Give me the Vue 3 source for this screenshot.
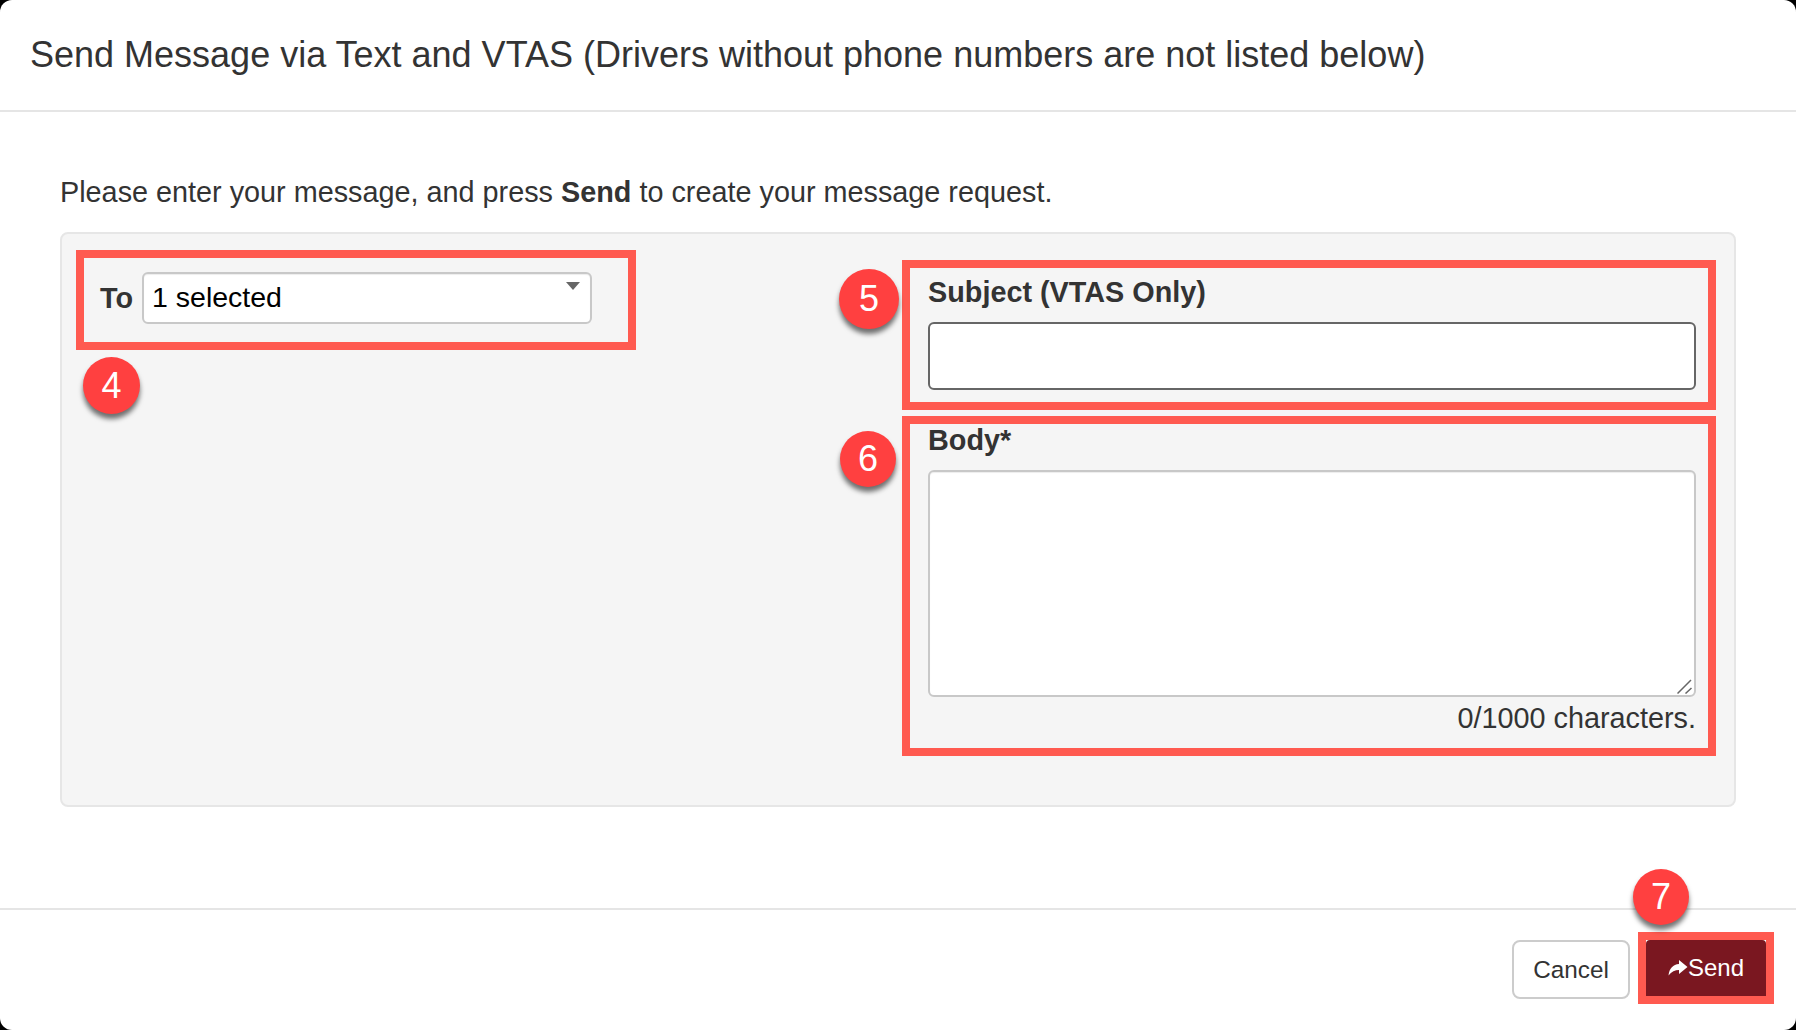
<template>
  <div class="modal">
    <header class="modal-header">
      <h4>Send Message via Text and VTAS (Drivers without phone numbers are not listed below)</h4>
    </header>

    <main class="modal-body">
      <p class="intro">Please enter your message, and press <b>Send</b> to create your message request.</p>
      <div class="well">
        <div class="col-left">
          <div class="callout to-box">
            <label>To</label>
            <div class="fake-select">
              <span>1 selected</span>
              <i class="caret"></i>
            </div>
            <span class="badge badge-4">4</span>
          </div>
        </div>
        <div class="col-right">
          <div class="callout subject-box">
            <label>Subject (VTAS Only)</label>
            <input type="text" class="subject" />
            <span class="badge badge-5">5</span>
          </div>
          <div class="callout body-box">
            <label>Body*</label>
            <div class="area-wrap">
              <textarea></textarea>
              <svg class="grip" width="16" height="16" viewBox="0 0 16 16">
                <path d="M0.5 15.5L14 2M8.5 15.5L14.5 10" stroke="#666" stroke-width="1.5" fill="none" />
              </svg>
            </div>
            <div class="count">{{ body.length }}/1000 characters.</div>
            <span class="badge badge-6">6</span>
          </div>
        </div>
      </div>
    </main>

    <footer class="modal-footer">
      <button type="button" class="btn-cancel">Cancel</button>
      <div class="send-box">
        <button type="button" class="btn-send">
          <svg width="20" height="16" viewBox="0 0 20 16">
            <path fill="#fff" d="M19.5 7L11 0V4C5 4.5 1.5 8 0.5 15.5C3.5 11.5 7 10 11 10V14Z" />
          </svg>Send
        </button>
        <span class="badge badge-7">7</span>
      </div>
    </footer>
  </div>
</template>

<script setup>
import { ref } from "vue";

const body = ref("");
</script>

<style>
html,
body {
  margin: 0;
  background: #000;
}
</style>

<style scoped>
.modal {
  width: 1796px;
  height: 1030px;
  display: flex;
  flex-direction: column;
  background: #fff;
  border-radius: 12px;
  overflow: hidden;
  font-family: "Liberation Sans", Arial, sans-serif;
  color: #333;
}

.modal-header {
  height: 110px;
  box-sizing: content-box;
  border-bottom: 2px solid #e5e5e5;
  display: flex;
  align-items: center;
  padding-left: 30px;
}

.modal-header h4 {
  margin: 0;
  font-size: 36px;
  font-weight: 400;
  line-height: 1;
}

.modal-body {
  flex: 1;
  padding: 0 60px;
}

.intro {
  margin: 62px 0 0;
  height: 58px;
  font-size: 28.8px;
  line-height: 36px;
}

.well {
  display: grid;
  grid-template-columns: 826px 1fr;
  height: 575px;
  box-sizing: border-box;
  background: #f5f5f5;
  border: 2px solid #e6e6e6;
  border-radius: 8px;
  padding: 16px 17px 0 14px;
}

.callout {
  position: relative;
  box-sizing: border-box;
  border: 8px solid #ff5a50;
}

label {
  font-size: 28.8px;
  font-weight: 700;
  line-height: 32px;
}

.to-box {
  width: 560px;
  height: 100px;
  display: flex;
  padding: 14px 0 0 16px;
  gap: 9px;
}

.to-box label {
  line-height: 52px;
}

.fake-select {
  position: relative;
  box-sizing: border-box;
  width: 450px;
  height: 52px;
  border: 2px solid #c8c8c8;
  border-radius: 6px;
  background: #fff;
  color: #000;
  font-size: 28.5px;
  line-height: 47px;
  padding-left: 8px;
  box-shadow: inset 0 1px 1px rgba(0, 0, 0, 0.075);
}

.caret {
  position: absolute;
  top: 8px;
  right: 10px;
  width: 0;
  height: 0;
  border-left: 7px solid transparent;
  border-right: 7px solid transparent;
  border-top: 8px solid #666;
}

.col-right {
  padding-top: 10px;
  display: flex;
  flex-direction: column;
  gap: 6px;
}

.subject-box {
  width: 814px;
  height: 150px;
  padding: 8px 12px 0 18px;
}

.subject-box label,
.body-box label {
  display: block;
}

.subject {
  display: block;
  box-sizing: border-box;
  width: 768px;
  height: 68px;
  margin-top: 14px;
  border: 2px solid #666;
  border-radius: 6px;
  background: #fff;
  outline: none;
}

.body-box {
  width: 814px;
  height: 340px;
  padding: 0 12px 0 18px;
}

.area-wrap {
  position: relative;
  width: 768px;
  height: 227px;
  margin-top: 14px;
}

textarea {
  display: block;
  box-sizing: border-box;
  width: 100%;
  height: 100%;
  border: 2px solid #c8c8c8;
  border-radius: 6px;
  background: #fff;
  resize: none;
  outline: none;
  box-shadow: inset 0 1px 1px rgba(0, 0, 0, 0.075);
}

.grip {
  position: absolute;
  right: 3px;
  bottom: 3px;
}

.count {
  text-align: right;
  width: 768px;
  font-size: 28.8px;
  line-height: 36px;
  margin-top: 3px;
}

.badge {
  position: absolute;
  border-radius: 50%;
  background: #ff4040;
  color: #fff;
  display: flex;
  align-items: center;
  justify-content: center;
  font-size: 36px;
  box-shadow: 0 5px 5px rgba(0, 0, 0, 0.55);
}

.badge-4 {
  left: -1px;
  top: 99px;
  width: 57px;
  height: 57px;
}

.badge-5 {
  left: -71px;
  top: 1px;
  width: 60px;
  height: 60px;
}

.badge-6 {
  left: -70px;
  top: 7px;
  width: 56px;
  height: 56px;
}

.modal-footer {
  height: 122px;
  border-top: 2px solid #e5e5e5;
  box-sizing: border-box;
  display: flex;
  justify-content: flex-end;
  gap: 8px;
  padding: 22px 22px 0 0;
}

.btn-cancel {
  box-sizing: border-box;
  width: 118px;
  height: 59px;
  margin-top: 8px;
  border: 2px solid #ccc;
  border-radius: 8px;
  background: #fff;
  color: #333;
  font-family: inherit;
  font-size: 24.3px;
}

.send-box {
  position: relative;
  width: 136px;
  height: 72px;
  box-sizing: border-box;
  border: 8px solid #ff5a50;
  background: #fff;
}

.btn-send {
  width: 120px;
  height: 56px;
  display: flex;
  align-items: center;
  justify-content: center;
  border: none;
  border-radius: 4px 4px 0 0;
  background: #7a1720;
  color: #fff;
  font-family: inherit;
  font-size: 24px;
  padding: 0;
}

.badge-7 {
  left: -13px;
  top: -71px;
  width: 56px;
  height: 56px;
}
</style>
